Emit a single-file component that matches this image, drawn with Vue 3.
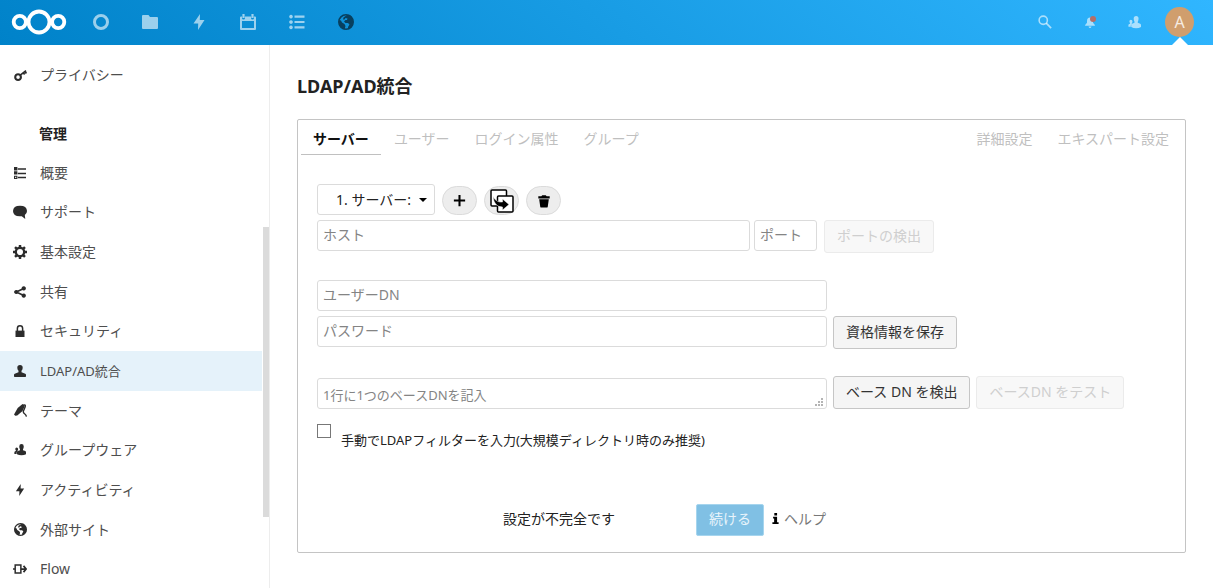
<script setup>
import { h, ref } from 'vue'

const glyphs = {
  ring: [{ d: 'M8 1.5a6.5 6.5 0 1 0 0 13a6.5 6.5 0 0 0 0-13z', s: 3 }],
  folder: [{ d: 'M1 1h5.5l1.5 2h7q1 0 1 1v10q0 1-1 1h-14q-1 0-1-1v-12q0-1 1-1z' }],
  bolt: [{ d: 'M9 0L2.5 9.5H7.2L7 16L13.5 6H8.8z' }],
  calendar: [
    { d: 'M3.5 0v4M12.5 0v4', s: 2.2 },
    { d: 'M1 2.5h1v1.5q0 1.5 1.5 1.5t1.5-1.5v-1.5h6v1.5q0 1.5 1.5 1.5t1.5-1.5v-1.5h1q1 0 1 1v11.5q0 1-1 1h-14q-1 0-1-1v-11.5q0-1 1-1zM2 7v7h12v-7z' }
  ],
  list: [
    { d: 'M2 .8a1.8 1.8 0 1 0 .01 0zM2 6.2a1.8 1.8 0 1 0 .01 0zM2 11.6a1.8 1.8 0 1 0 .01 0z' },
    { d: 'M5.5 2.6h10M5.5 8h10M5.5 13.4h10', s: 2.2 }
  ],
  globe: [
    { d: 'M8 .8a7.2 7.2 0 1 0 0 14.4a7.2 7.2 0 0 0 0-14.4z', s: 1.6 },
    { d: 'M9 1h3l3 4v6l-3 3.5l-2 .5v-2l1.5-2.500l-1.500-1.500h-2.500l-1.500-1.500l1.500-1.500h1.500l.5-1.500l-2-.5l-1 1.500h-1.500l.5-2l2-1.500z' },
    { d: 'M1 6l2 .5l1 2l2.500 1.500l1 2l-1 3.500l-3-1.500l-2.500-4z' }
  ],
  search: [
    { d: 'M6 1.3a4.7 4.7 0 1 0 0 9.4a4.7 4.7 0 0 0 0-9.4z', s: 1.8 },
    { d: 'M9.4 9.4l5.6 5.6', s: 2 }
  ],
  bell: [{ d: 'M8 2q-4 0-4 5v2l-2.5 3v1h13v-1l-2.5-3v-2q0-5-4-5zM6 14h4q-.5 2-2 2t-2-2z' }],
  contacts: [
    { d: 'M10 0q3 0 3 3.2q0 2.3-1 3.8v1.4l3 1q1 .4 1 1.6v2.5q-2.5 1.5-6 1.5t-6-1.5v-2.5q0-1.2 1-1.6l3-1v-1.4q-1-1.500-1-3.800q0-3.200 3-3.200z' },
    { d: 'M3.500 4.500q2 0 2 2.200q0 1.500-.8 2.300v1l-1.200 1.200v2h-3v-2q0-1 1-1.400l1-.4v-.9q-.8-.8-.8-2q0-2 1.800-2z' }
  ],
  key: [
    { d: 'M5 6.500a3.500 3.500 0 1 0 0 7a3.500 3.500 0 0 0 0-7z', s: 2.600 },
    { d: 'M7.300 7.800L14.800 2M11.500 4.500l1.600 2.300M13.500 3l1.800 2.500', s: 2.100 }
  ],
  overview: [
    { d: 'M0 0h4.500v4.500h-4.500zM0 5.500h4.500v4.500h-4.500zM0 11.500h4.500v4.500h-4.500zM1.500 13v1.500h1.500v-1.500z' },
    { d: 'M5 2.500h11M5 8.500h11M5 14h11', s: 2 }
  ],
  bubble: [{ d: 'M8 0.800q7.800 0 8 6q0 3-2.500 4.700l.5 4.500l-4-3.200q-9.800 1-10-6q.2-6 8-6z' }],
  gear: [
    { d: 'M8 3.200a4.800 4.800 0 1 0 0 9.600a4.800 4.800 0 0 0 0-9.600z', s: 2.700 },
    { d: 'M8 0v3M8 13v3M0 8h3M13 8h3M2.300 2.300l2.200 2.200M11.500 11.500l2.200 2.200M2.300 13.700l2.200-2.200M11.500 4.500l2.200-2.200', s: 2.800 }
  ],
  share: [
    { d: 'M13 .4a2.800 2.800 0 1 0 .01 0zM3 5.200a2.800 2.800 0 1 0 .01 0zM13 10a2.800 2.800 0 1 0 .01 0z' },
    { d: 'M13 3.200L3 8L13 12.800', s: 2.200 }
  ],
  lock: [
    { d: 'M4.500 8V4.500q0-3.500 3.500-3.500t3.500 3.500V8', s: 2 },
    { d: 'M2 7.500h12v8.500h-12z' }
  ],
  user: [{ d: 'M8 0q3.600 0 3.600 3.600q0 2.400-1.600 4.200v2l5 1.700q1 .5 1 1.500v2q0 1-1 1h-14q-1 0-1-1v-2q0-1 1-1.500l5-1.700v-2q-1.600-1.800-1.600-4.200q0-3.600 3.600-3.600z' }],
  brush: [
    { d: 'M10.500 0L4.500 5L0 13L1.500 14.500L4 14L10.500 8.500L13.500 2z' },
    { d: 'M11.500 1.500q3-1.500 2.300 1.800l-2.300 5.500q-.3 2 1.500 3.200t2.300 3.500', s: 1.700 }
  ],
  flow: [
    { d: 'M2.500 3.500h6.500v9h-6.500zM0 8h2.500', s: 1.700 },
    { d: 'M9 8h6M12 4.500l3 3.500l-3 3.500', s: 2 }
  ],
  plus: [{ d: 'M8 2v12M2 8h12', s: 2.200 }],
  trash: [{ d: 'M6 1.500h4l1 1h3.500v2.500h-13v-2.500h3.500zM2.500 6h11l-1.200 8.500q-.2 1-1.300 1h-6q-1.100 0-1.300-1z' }],
  info: [{ d: 'M6.300 0h4v3.500h-4zM4.500 5.500h5.800v8h2.200v2.500h-9v-2.500h2.500v-5.500h-1.500z' }],
  caret: [{ d: 'M0 4h16l-8 8z' }]
}

const Icon = ({ name, size = 16 }) =>
  h('svg', { viewBox: '0 0 16 16', width: size, height: size, 'aria-hidden': 'true' },
    glyphs[name].map(({ d, s }) => h('path', {
      d,
      'fill-rule': 'evenodd',
      fill: s ? 'none' : 'currentColor',
      stroke: s ? 'currentColor' : 'none',
      'stroke-width': s
    })))
Icon.props = ['name', 'size']

const apps = [
  { icon: 'ring', label: 'ダッシュボード' },
  { icon: 'folder', label: 'ファイル' },
  { icon: 'bolt', label: 'アクティビティ' },
  { icon: 'calendar', label: 'カレンダー' },
  { icon: 'list', label: 'タスク' },
  { icon: 'globe', label: '外部サイト', dark: true }
]

const adminItems = [
  { icon: 'overview', label: '概要' },
  { icon: 'bubble', label: 'サポート', size: 14 },
  { icon: 'gear', label: '基本設定', size: 14 },
  { icon: 'share', label: '共有' },
  { icon: 'lock', label: 'セキュリティ' },
  { icon: 'user', label: 'LDAP/AD統合', active: true },
  { icon: 'brush', label: 'テーマ', size: 13 },
  { icon: 'contacts', label: 'グループウェア' },
  { icon: 'bolt', label: 'アクティビティ' },
  { icon: 'globe', label: '外部サイト', size: 13 },
  { icon: 'flow', label: 'Flow', size: 14 }
]

const tabs = ['サーバー', 'ユーザー', 'ログイン属性', 'グループ']
const sideTabs = ['詳細設定', 'エキスパート設定']
const current = ref('サーバー')
const manual = ref(false)
</script>

<template>
  <div class="page">
    <header class="topbar">
      <a href="#" class="logo" aria-label="ホーム">
        <svg viewBox="0 0 56 26" width="56" height="26" fill="none" stroke="#fff">
          <circle cx="28" cy="13" r="10.500" stroke-width="3.800" />
          <circle cx="8.800" cy="13" r="6.100" stroke-width="3.800" />
          <circle cx="47.200" cy="13" r="6.100" stroke-width="3.800" />
        </svg>
      </a>
      <nav class="apps">
        <a v-for="app in apps" :key="app.icon" href="#" :class="['app', { dark: app.dark }]" :aria-label="app.label">
          <Icon :name="app.icon" />
        </a>
      </nav>
      <div class="tools">
        <button class="tool" aria-label="検索"><Icon name="search" :size="14" /></button>
        <button class="tool" aria-label="通知"><Icon name="bell" :size="12" /><span class="dot"></span></button>
        <button class="tool" aria-label="連絡先"><Icon name="contacts" :size="13" /></button>
        <button class="avatar" aria-label="設定">A</button>
      </div>
    </header>

    <div class="body">
      <aside class="sidebar">
        <a href="#" class="item single"><span class="mark"><Icon name="key" :size="13" /></span>プライバシー</a>
        <h2 class="group">管理</h2>
        <nav class="items">
          <a v-for="item in adminItems" :key="item.label" href="#" :class="['item', { active: item.active }]">
            <span class="mark"><Icon :name="item.icon" :size="item.size || 12" /></span>{{ item.label }}
          </a>
        </nav>
        <span class="thumb"></span>
      </aside>

      <main class="content">
        <h1>LDAP/AD統合</h1>
        <section class="panel">
          <nav class="tabs">
            <a v-for="t in tabs" :key="t" href="#" :class="['tab', { on: t === current }]" @click.prevent="current = t">{{ t }}</a>
            <span class="spacer"></span>
            <a v-for="t in sideTabs" :key="t" href="#" :class="['tab', { on: t === current }]" @click.prevent="current = t">{{ t }}</a>
          </nav>

          <form class="form" @submit.prevent>
            <div class="row config">
              <span class="pick">
                <select aria-label="サーバー設定"><option>1. サーバー:</option></select>
                <Icon class="caret" name="caret" :size="8" />
              </span>
              <button type="button" class="round" aria-label="追加"><Icon name="plus" :size="15" /></button>
              <button type="button" class="round" aria-label="複製">
                <svg viewBox="0 0 24 24" width="24" height="24" fill="#fff" stroke="#000" stroke-width="1.500">
                  <rect x="1" y="1" width="15.500" height="16" rx="1" />
                  <rect x="7.500" y="7" width="15.500" height="16" rx="1" />
                  <path d="M3 7.500q1.500 3.500 4.500 4.800q2 1 5 .7v-3l6.500 5.500l-6.500 5.500v-3q-8.500 0-9.500-10.500z" fill="#000" stroke="#fff" stroke-width="0.500" />
                </svg>
              </button>
              <button type="button" class="round" aria-label="削除"><Icon name="trash" :size="14" /></button>
            </div>
            <div class="row host">
              <input class="field wide" type="text" placeholder="ホスト" aria-label="ホスト">
              <input class="field port" type="text" placeholder="ポート" aria-label="ポート">
              <button type="button" class="btn" disabled>ポートの検出</button>
            </div>
            <div class="row block">
              <input class="field full" type="text" placeholder="ユーザーDN" aria-label="ユーザーDN">
            </div>
            <div class="row">
              <input class="field full" type="password" placeholder="パスワード" aria-label="パスワード">
              <button type="button" class="btn">資格情報を保存</button>
            </div>
            <div class="row block base">
              <span class="area">
                <textarea class="field full" rows="1" placeholder="1行に1つのベースDNを記入" aria-label="ベースDN"></textarea>
                <svg class="grip" viewBox="0 0 9 9" width="9" height="9" fill="#b4b4b4" aria-hidden="true">
                  <path d="M6 0h2v2h-2zM6 3h2v2h-2zM3 3h2v2h-2zM6 6h2v2h-2zM3 6h2v2h-2zM0 6h2v2h-2z" />
                </svg>
              </span>
              <button type="button" class="btn">ベース DN を検出</button>
              <button type="button" class="btn" disabled>ベースDN をテスト</button>
            </div>
            <div class="check">
              <input id="manual" v-model="manual" type="checkbox">
              <label for="manual">手動でLDAPフィルターを入力(大規模ディレクトリ時のみ推奨)</label>
            </div>
            <div class="footer">
              <span class="status">設定が不完全です</span>
              <button type="submit" class="next" disabled>続ける</button>
              <a href="#" class="help"><Icon name="info" :size="11" />ヘルプ</a>
            </div>
          </form>
        </section>
      </main>
    </div>
  </div>
</template>

<style>
body {
  margin: 0;
}
</style>

<style scoped>
.page,
.page * {
  box-sizing: border-box;
}
.page {
  display: flex;
  flex-direction: column;
  height: 100vh;
  overflow: hidden;
  background: #fff;
  color: #222;
  font: 14px/20px "Noto Sans", "Noto Sans CJK JP", sans-serif;
}
button,
input,
select,
textarea {
  margin: 0;
  font: inherit;
}
a {
  color: inherit;
  text-decoration: none;
}
svg {
  display: block;
  flex: none;
}

.topbar {
  display: flex;
  flex: none;
  align-items: center;
  height: 45px;
  padding: 0 19px 1px 11px;
  background: linear-gradient(40deg, #0082c9 0%, #30b6ff 100%);
}
.apps {
  display: flex;
  margin-left: 9px;
}
.app {
  display: grid;
  place-items: center;
  width: 49px;
  height: 44px;
  color: rgba(255, 255, 255, 0.6);
}
.app.dark {
  color: #08405f;
}
.tools {
  display: flex;
  align-items: center;
  margin-left: auto;
}
.tool {
  position: relative;
  display: grid;
  place-items: center;
  width: 45px;
  height: 44px;
  padding: 0;
  border: 0;
  background: none;
  color: rgba(255, 255, 255, 0.6);
}
.dot {
  position: absolute;
  top: 16px;
  right: 16px;
  width: 6px;
  height: 6px;
  border-radius: 50%;
  background: #b56e68;
}
.avatar {
  position: relative;
  width: 29px;
  height: 30px;
  margin-left: 8px;
  padding: 0;
  border: 0;
  border-radius: 50%;
  background: #d09e6d;
  color: #f6ece2;
  font-size: 16px;
}
.avatar::after {
  content: "";
  position: absolute;
  top: 30px;
  left: 7px;
  border: 8px solid transparent;
  border-top: 0;
  border-bottom-color: #fff;
}

.body {
  display: flex;
  flex: 1;
  min-height: 0;
}
.sidebar {
  position: relative;
  flex: none;
  width: 270px;
  padding: 10px 7px 0 0;
  overflow: hidden;
  border-right: 1px solid #ededed;
}
.items {
  display: grid;
  grid-template-rows: repeat(11, 1fr);
  height: 436px;
}
.item {
  display: flex;
  align-items: center;
  color: #4e4e4e;
}
.single {
  height: 40px;
}
.item.active {
  background: #e5f2fa;
  font-size: 13px;
}
.mark {
  display: grid;
  flex: none;
  place-items: center;
  width: 40px;
  color: #2c2c2c;
}
.group {
  margin: 19px 0 0 39px;
  font-size: 14px;
  line-height: 39px;
}
.thumb {
  position: absolute;
  top: 182px;
  right: 0;
  width: 6px;
  height: 290px;
  background: #dbdbdb;
}

.content {
  flex: 1;
  min-width: 0;
  padding: 29px 27px 0;
  overflow: auto;
}
h1 {
  margin: 0 0 20px;
  font-size: 18px;
  line-height: 25px;
}
.panel {
  border: 1px solid #c4c4c4;
  border-radius: 2px;
}
.tabs {
  display: flex;
  gap: 1px;
  padding: 0 4px 0 3px;
}
.tab {
  height: 35px;
  padding: 0 12px;
  border-bottom: 1px solid transparent;
  color: #bfbfbf;
  line-height: 38px;
  white-space: nowrap;
}
.tab.on {
  border-color: #c0c0c0;
  color: #111;
  font-weight: 700;
}
.spacer {
  flex: 1;
}
.form {
  padding: 29px 19px 16px;
}
.row {
  display: flex;
  align-items: flex-start;
  gap: 6px;
}
.block {
  margin: 27px 0 5px;
}
.config {
  align-items: flex-end;
  gap: 7px;
  margin-bottom: 5px;
}
.host {
  gap: 4px;
}
.host .btn {
  margin-left: 3px;
}
.base {
  align-items: flex-end;
  margin-bottom: 15px;
}
.pick {
  position: relative;
}
.pick select {
  display: block;
  width: 118px;
  height: 31px;
  padding: 0 18px;
  appearance: none;
  border: 1px solid #dbdbdb;
  border-radius: 3px;
  background: #fff;
  color: #222;
}
.caret {
  position: absolute;
  top: 12px;
  right: 8px;
  color: #000;
}
.round {
  display: grid;
  place-items: center;
  width: 35px;
  height: 29px;
  padding: 0;
  border: 1px solid #dbdbdb;
  border-radius: 15px;
  background: #ededed;
  color: #000;
}
.field {
  height: 31px;
  padding: 0 5px 2px;
  border: 1px solid #dbdbdb;
  border-radius: 3px;
  background: #fff;
  color: #222;
}
.field::placeholder {
  color: #848484;
  opacity: 1;
}
.wide {
  width: 433px;
}
.port {
  width: 63px;
}
.full {
  width: 510px;
}
.area {
  position: relative;
}
.area textarea {
  display: block;
  padding: 6px 5px 3px;
  overflow: hidden;
  font-size: 13px;
  resize: none;
}
.grip {
  position: absolute;
  right: 3px;
  bottom: 2px;
}
.btn {
  height: 33px;
  padding: 0 12px 2px;
  border: 1px solid #c6c6c6;
  border-radius: 3px;
  background: #f5f5f5;
  color: #333;
  white-space: nowrap;
}
.btn:disabled {
  border-color: #ebebeb;
  background: #f8f8f8;
  color: #cfcfcf;
}
.check {
  display: flex;
  align-items: flex-start;
  gap: 10px;
}
.check input {
  width: 14px;
  height: 14px;
  appearance: none;
  border: 1px solid #777;
  background: #fff;
}
.check input:checked {
  background: #0082c9;
}
.check label {
  margin-top: 6px;
  font-size: 13px;
}
.footer {
  display: flex;
  align-items: center;
  margin-top: 54px;
  padding-left: 186px;
}
.status {
  width: 193px;
  padding-bottom: 3px;
}
.next {
  height: 32px;
  padding: 0 12px 3px;
  border: 1px solid #a6d5ee;
  border-radius: 2px;
  background: #80c0e4;
  color: #e8f4fb;
}
.help {
  display: flex;
  align-items: center;
  gap: 3px;
  margin-left: 6px;
  padding-bottom: 3px;
  color: #777;
}
.help svg {
  color: #000;
}
</style>
